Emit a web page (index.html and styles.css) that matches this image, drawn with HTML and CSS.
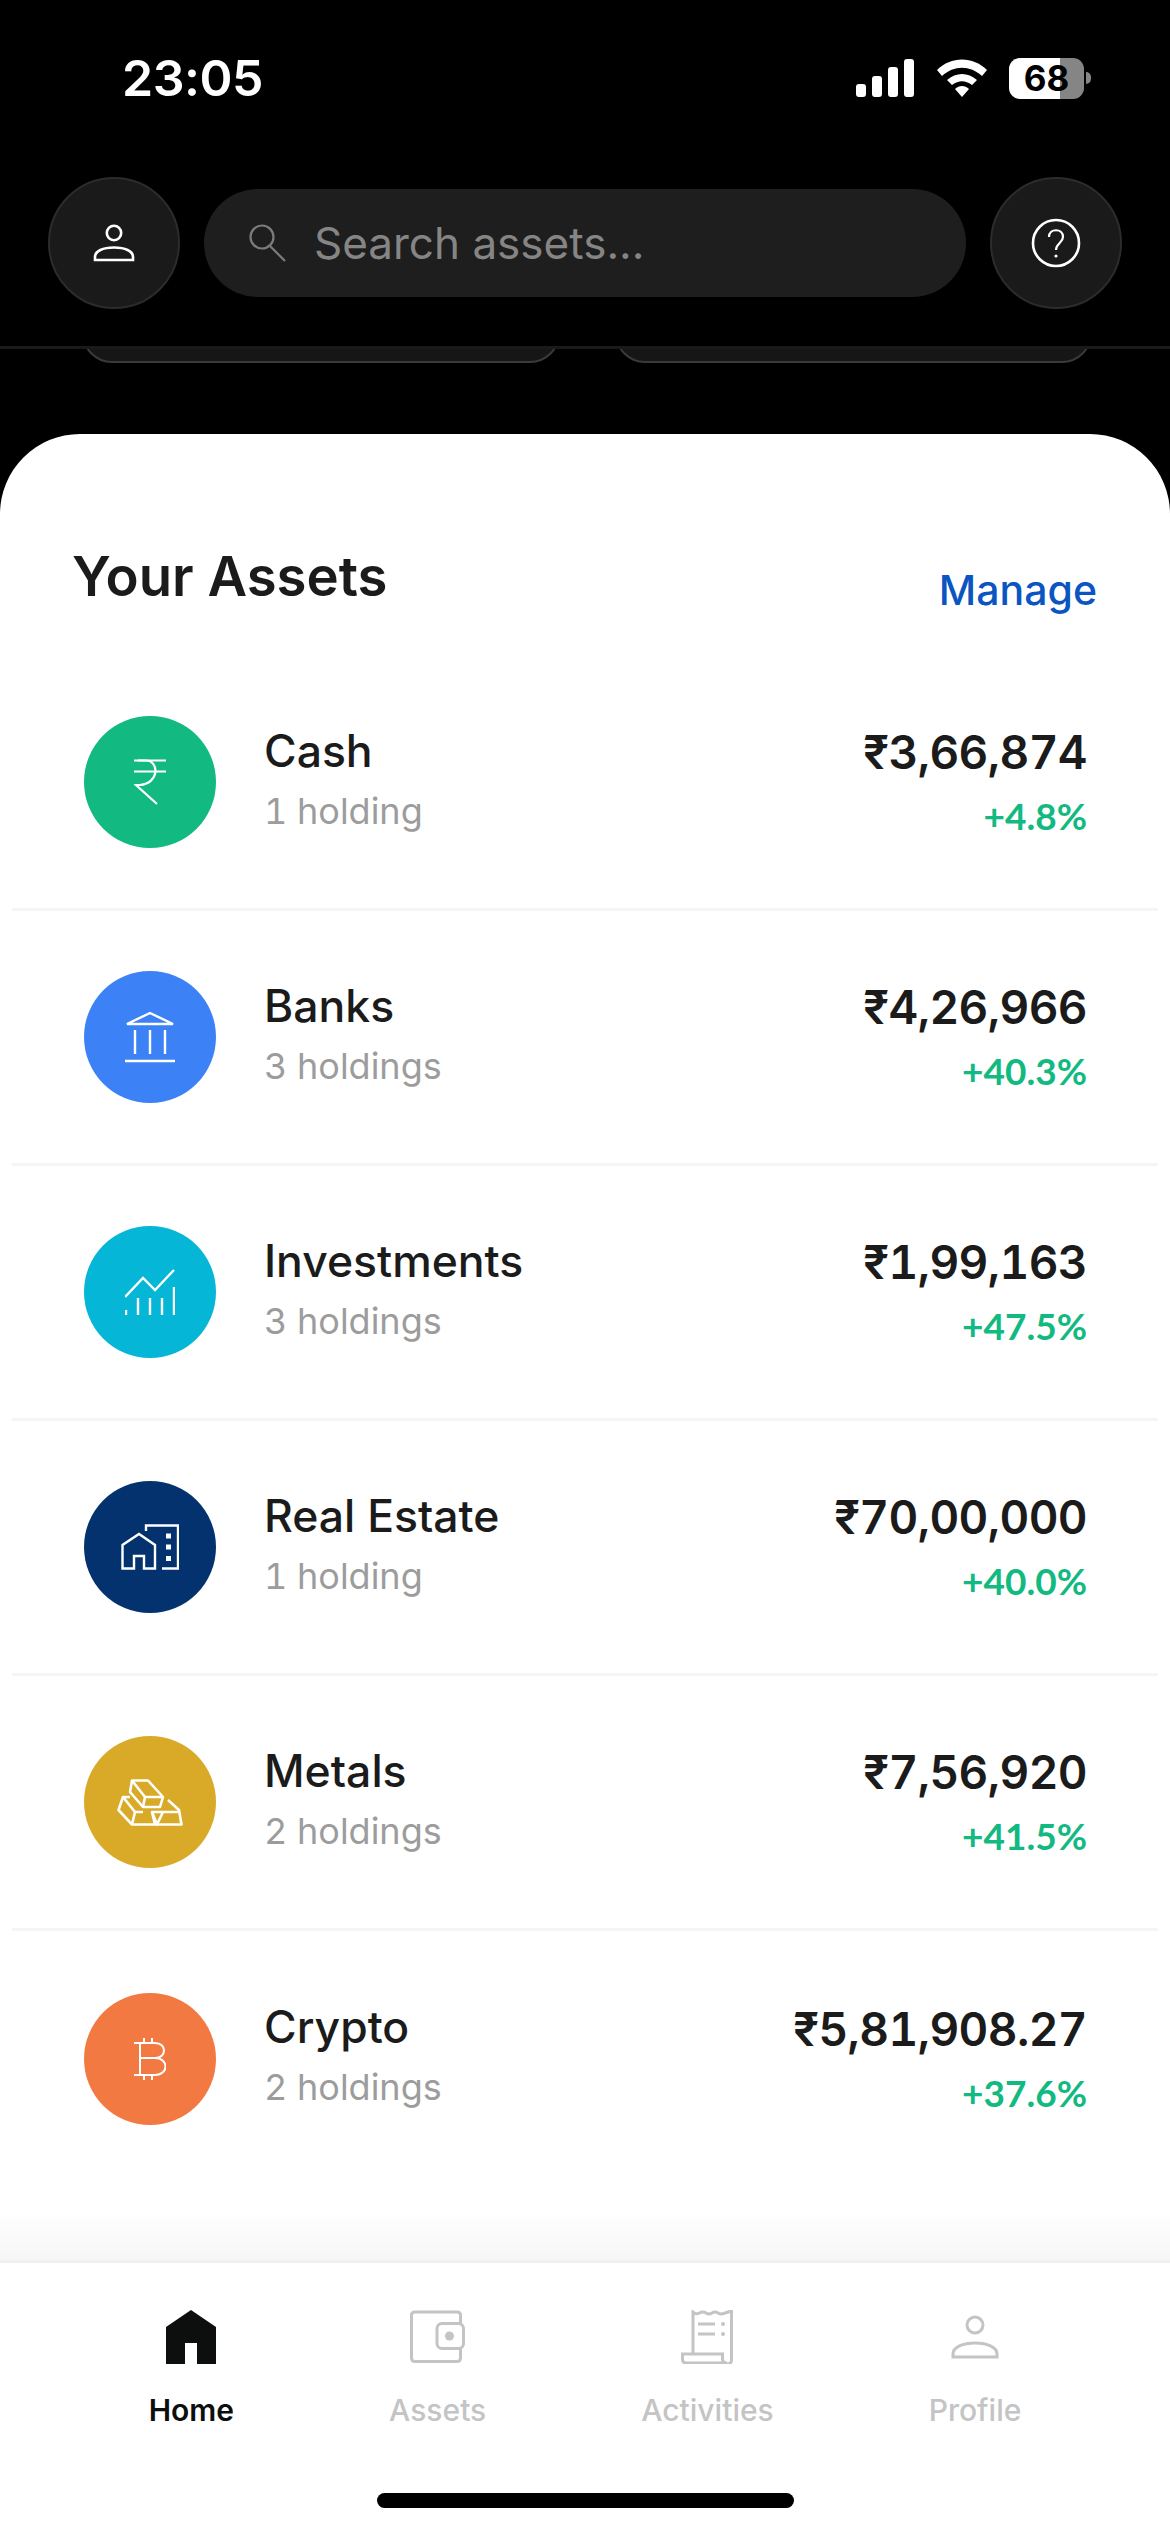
FILE: index.html
```html
<!DOCTYPE html>
<html lang="en">
  <head>
    <title>Assets</title>
    <meta charset="utf-8" />
    <meta name="viewport" content="width=device-width initial-scale=1" />
    <link rel="stylesheet" href="styles.css">
  </head>

  <body>
    <div class="screen">
      <div class="status">
        <span class="status__time">23:05</span>
        <div class="status__icons">
          <svg class="status__signal" viewBox="0 0 58 38" width="58" height="38">
            <rect x="0" y="25" width="10" height="13" rx="3" />
            <rect x="16" y="17" width="10" height="21" rx="3" />
            <rect x="32" y="8" width="10" height="30" rx="3" />
            <rect x="48" y="0" width="10" height="38" rx="3" />
          </svg>
          <svg class="status__wifi" viewBox="0 0 50 38" width="50" height="38">
            <path d="M0 11 C14 -3 36 -3 50 11 L45 17 C33 6 17 6 5 17 Z" />
            <path d="M10 21 C19 13 31 13 40 21 L35 26 C28 21 22 21 15 26 Z" />
            <path d="M18 30 C22 26 28 26 32 30 L25 38 Z" />
          </svg>
          <div class="battery">
            <span class="battery__level">68</span>
          </div>
          <span class="battery__tip"></span>
        </div>
      </div>

      <div class="topbar">
        <button class="round">
          <svg viewBox="0 0 42 38" width="42" height="38" fill="none" stroke="#fff" stroke-width="2.6">
            <circle cx="21" cy="9" r="7.2" />
            <path d="M2 36 V33 C2 27 10 23.5 21 23.5 C32 23.5 40 27 40 33 V36 Z" />
          </svg>
        </button>
        <div class="search">
          <svg viewBox="0 0 38 38" width="38" height="38" fill="none" stroke="#7c7c7c" stroke-width="2.2">
            <circle cx="14" cy="13" r="11.5" />
            <path d="M22 22 L37 37" />
          </svg>
          <span class="search__text">Search assets...</span>
        </div>
        <button class="round">
          <svg viewBox="0 0 50 50" width="50" height="50" fill="none" stroke="#fff" stroke-width="2.6">
            <circle cx="25" cy="25" r="23" />
            <path d="M18 19 C18 10 32 10 32 19 C32 25 25 25 25 32" stroke-width="2.2" />
            <circle cx="25" cy="38" r="1.6" fill="#fff" stroke="none" />
          </svg>
        </button>
      </div>

      <div class="peek">
        <div class="peek__card"></div>
        <div class="peek__card"></div>
      </div>

      <main class="sheet">
        <div class="sheet__head">
          <h1>Your Assets</h1>
          <a class="manage">Manage</a>
        </div>

        <ul class="list">
          <li class="asset">
            <span class="asset__icon asset__icon--cash">
              <svg viewBox="0 0 32 46" width="32" height="46" fill="none" stroke="#fff" stroke-width="2.2">
                <path d="M0 1.5 H32 M0 12.5 H32" />
                <path d="M4 1.5 H12 C25 1.5 26 24 6 26 H2 L23 45" />
              </svg>
            </span>
            <div class="asset__name">
              <strong>Cash</strong>
              <span>1 holding</span>
            </div>
            <div class="asset__value">
              <strong>₹3,66,874</strong>
              <span>+4.8%</span>
            </div>
          </li>

          <li class="asset">
            <span class="asset__icon asset__icon--banks">
              <svg viewBox="0 0 50 52" width="50" height="52" fill="none" stroke="#fff" stroke-width="2.4">
                <path d="M2 13 L25 2 L48 13 Z" />
                <path d="M10 19 V43 M25 19 V43 M40 19 V43" />
                <path d="M0 50 H50" />
              </svg>
            </span>
            <div class="asset__name">
              <strong>Banks</strong>
              <span>3 holdings</span>
            </div>
            <div class="asset__value">
              <strong>₹4,26,966</strong>
              <span>+40.3%</span>
            </div>
          </li>

          <li class="asset">
            <span class="asset__icon asset__icon--investments">
              <svg viewBox="0 0 50 46" width="50" height="46" fill="none" stroke="#fff" stroke-width="2.4">
                <path d="M0 28 L18 9 L30 21 L49 1" />
                <path d="M1 46 V41 M13 46 V29 M25 46 V29 M37 46 V29 M49 46 V18" />
              </svg>
            </span>
            <div class="asset__name">
              <strong>Investments</strong>
              <span>3 holdings</span>
            </div>
            <div class="asset__value">
              <strong>₹1,99,163</strong>
              <span>+47.5%</span>
            </div>
          </li>

          <li class="asset">
            <span class="asset__icon asset__icon--estate">
              <svg viewBox="0 0 58 46" width="58" height="46" fill="none" stroke="#fff" stroke-width="2.4">
                <path d="M25 7 V1.5 H57 V44.5 H41" />
                <path d="M1.5 44.5 V21 L18 10 L34 21 V44.5 H23 V32 H13 V44.5 Z" />
                <path d="M45 9.5 h5 v5 h-5 Z M45 20.5 h5 v5 h-5 Z M45 32 h5 v5 h-5 Z" fill="#fff" stroke="none" />
              </svg>
            </span>
            <div class="asset__name">
              <strong>Real Estate</strong>
              <span>1 holding</span>
            </div>
            <div class="asset__value">
              <strong>₹70,00,000</strong>
              <span>+40.0%</span>
            </div>
          </li>

          <li class="asset">
            <span class="asset__icon asset__icon--metals">
              <svg viewBox="0 0 66 47" width="66" height="47" fill="none" stroke="#fff" stroke-width="2.6" stroke-linejoin="round">
                <path d="M15 1.500 H31 L46 18 L43 28 H26 L13 13 Z" />
                <path d="M15 1.500 L28 18 H46 M28 18 L26 28" />
                <path d="M13 18 H6 L1.500 31 L15 45.500 H64.500 L62 31 L51 21" />
                <path d="M6 18 L18 33 H26 M18 33 L15 45.500" />
                <path d="M35 33 H62 M46 33 L40 45.500 L35 33 L38 45.500" />
              </svg>
            </span>
            <div class="asset__name">
              <strong>Metals</strong>
              <span>2 holdings</span>
            </div>
            <div class="asset__value">
              <strong>₹7,56,920</strong>
              <span>+41.5%</span>
            </div>
          </li>

          <li class="asset asset--last">
            <span class="asset__icon asset__icon--crypto">
              <svg viewBox="0 0 32 44" width="32" height="44" fill="none" stroke="#fff" stroke-width="2">
                <path d="M0 6 H21 C33 6 33 21 21 21 H5 M21 21 C35 21 35 38 21 38 H0" />
                <path d="M6 6 V38" />
                <path d="M10 1 V6 M18 1 V6 M10 38 V43 M18 38 V43" />
              </svg>
            </span>
            <div class="asset__name">
              <strong>Crypto</strong>
              <span>2 holdings</span>
            </div>
            <div class="asset__value">
              <strong>₹5,81,908.27</strong>
              <span>+37.6%</span>
            </div>
          </li>
        </ul>

        <div class="fade"></div>

        <nav class="tabs">
          <a class="tab tab--active">
            <svg viewBox="0 0 50 54" width="50" height="54">
              <path fill="#0d0f0e" d="M25 0 L50 17 V54 H31 V33 H19 V54 H0 V17 Z" />
            </svg>
            <span>Home</span>
          </a>
          <a class="tab">
            <svg viewBox="0 0 55 54" width="55" height="54" fill="none" stroke="#c4c4c4" stroke-width="3">
              <path d="M50.500 13 V5 Q50.500 2 47 2 H5 Q1.500 2 1.500 5 V48 Q1.500 51.500 5 51.500 H47 Q50.500 51.500 50.500 48 V38" />
              <rect x="27" y="13.500" width="26.500" height="25" rx="5" />
              <circle cx="39.500" cy="26" r="4.500" fill="#c4c4c4" stroke="none" />
            </svg>
            <span>Assets</span>
          </a>
          <a class="tab">
            <svg viewBox="0 0 52 54" width="52" height="54" fill="none" stroke="#c4c4c4" stroke-width="3">
              <path d="M12 44 V2 Q15 5 18.500 3 Q22 1 25 3 Q28 5 31 3 Q34 1 37 3 Q40 5 44 3 L50.500 1 V50 Q50.500 54 46 54 H44" />
              <path d="M1.500 44 H41.500 V49 Q41.500 53 46 53 H5 Q1.500 53 1.500 49 Z" />
              <path d="M17 14 H34 M17 24 H34" />
              <circle cx="42" cy="14" r="2" fill="#c4c4c4" stroke="none" />
              <circle cx="42" cy="24" r="2" fill="#c4c4c4" stroke="none" />
            </svg>
            <span>Activities</span>
          </a>
          <a class="tab">
            <svg viewBox="0 0 50 54" width="50" height="54" fill="none" stroke="#c4c4c4" stroke-width="3">
              <circle cx="25" cy="15" r="8" />
              <path d="M3 47 V44 C3 37 13 33 25 33 C37 33 47 37 47 44 V47 Z" />
            </svg>
            <span>Profile</span>
          </a>
        </nav>

        <div class="home-bar"></div>
      </main>
    </div>
  </body>
</html>
```

FILE: styles.css
```css
* {
  box-sizing: border-box;
}

html,
body {
  margin: 0;
  padding: 0;
  background: #000;
}

.screen {
  display: flex;
  flex-direction: column;
  width: 1170px;
  height: 2532px;
  overflow: hidden;
  font-family: "Inter", "Noto Sans", sans-serif;
}

/* status bar */

.status {
  display: flex;
  align-items: center;
  justify-content: space-between;
  height: 78px;
  margin-top: 39px;
  margin-bottom: 60px;
  padding: 0 79px 0 122px;
  color: #fff;
}

.status__time {
  font-size: 50px;
  font-weight: 600;
  letter-spacing: -0.5px;
}

.status__icons {
  display: flex;
  align-items: center;
}

.status__signal,
.status__wifi {
  fill: #fff;
}

.status__signal {
  margin-right: 23px;
}

.status__wifi {
  margin-right: 22px;
}

.battery {
  width: 75px;
  height: 41px;
  border-radius: 11px;
  background: linear-gradient(to right, #fff 68%, #858585 68%);
  color: #000;
  text-align: center;
  font-size: 35px;
  font-weight: 700;
  line-height: 41px;
}

.battery__tip {
  width: 5px;
  height: 12px;
  margin-left: 2px;
  border-radius: 0 6px 6px 0;
  background: #858585;
}

/* search row */

.topbar {
  display: flex;
  align-items: center;
  gap: 24px;
  padding: 0 48px;
  height: 132px;
  flex-shrink: 0;
}

.round {
  all: unset;
  box-sizing: border-box;
  display: flex;
  align-items: center;
  justify-content: center;
  flex-shrink: 0;
  width: 132px;
  height: 132px;
  border: 2px solid #2c2c2c;
  border-radius: 50%;
  background: #1a1a1a;
}

.search {
  display: flex;
  align-items: center;
  flex: 1;
  gap: 28px;
  height: 108px;
  padding-left: 44px;
  border-radius: 54px;
  background: #1e1e1e;
}

.search__text {
  color: #858585;
  font-size: 44px;
}

.peek {
  display: flex;
  gap: 55px;
  flex-shrink: 0;
  height: 17px;
  margin-top: 37px;
  margin-bottom: 71px;
  padding: 0 78px 0 82px;
  border-top: 3px solid #1a1a1a;
  overflow: hidden;
}

.peek__card {
  flex: 1;
  height: 60px;
  margin-top: -46px;
  border: 2px solid #3a3a3a;
  border-radius: 44px;
  background: #161616;
}

/* white sheet */

.sheet {
  display: flex;
  flex-direction: column;
  flex: 1;
  border-radius: 80px 80px 0 0;
  background: #fff;
}

.sheet__head {
  display: flex;
  align-items: flex-start;
  justify-content: space-between;
  flex-shrink: 0;
  height: 222px;
  padding: 108px 73px 0 72px;
}

h1 {
  margin: 0;
  color: #1b1b1b;
  font-size: 54.5px;
  font-weight: 600;
  line-height: 68px;
}

.manage {
  margin-top: 20px;
  color: #0a55c2;
  font-size: 41px;
  font-weight: 500;
  line-height: 56px;
}

.list {
  margin: 0;
  padding: 0 12px;
  list-style-type: none;
}

.asset {
  display: flex;
  align-items: center;
  height: 255px;
  padding: 0 71px 0 72px;
  border-bottom: 3px solid #f5f5f5;
}

.asset--last {
  border-bottom: 0;
}

.asset__icon {
  display: flex;
  align-items: center;
  justify-content: center;
  flex-shrink: 0;
  width: 132px;
  height: 132px;
  margin-right: 48px;
  border-radius: 50%;
}

.asset__icon--cash {
  background: #12b981;
}

.asset__icon--banks {
  background: #3c82f6;
}

.asset__icon--investments {
  background: #06b6d6;
}

.asset__icon--estate {
  background: #03326e;
}

.asset__icon--metals {
  background: #d8aa27;
}

.asset__icon--crypto {
  background: #f27a42;
}

.asset__name,
.asset__value {
  display: flex;
  flex-direction: column;
}

.asset__name {
  flex: 1;
  gap: 10px;
  padding-bottom: 7px;
}

.asset__value {
  align-items: flex-end;
  gap: 14px;
}

.asset__name strong,
.asset__value strong {
  color: #1b1b1b;
  line-height: 54px;
}

.asset__name strong {
  font-size: 44.5px;
  font-weight: 500;
}

.asset__value strong {
  font-size: 46px;
  font-weight: 600;
  font-variant-numeric: tabular-nums;
  letter-spacing: -0.6px;
}

.asset__name span {
  color: #9c9c9c;
  font-size: 36px;
  font-variant-numeric: tabular-nums;
  line-height: 46px;
}

.asset__value span {
  color: #12b981;
  font-family: "Lato", sans-serif;
  font-size: 37px;
  font-weight: 700;
  line-height: 46px;
}

/* bottom tabs */

.fade {
  flex: 1;
  background: linear-gradient(to bottom, #fff 35%, #f6f6f6);
}

.tabs {
  display: flex;
  justify-content: center;
  gap: 155px;
  height: 233px;
  padding-top: 47px;
  border-top: 3px solid #f0f0f0;
}

.tab {
  display: flex;
  flex-direction: column;
  align-items: center;
  gap: 28px;
  color: #c4c4c4;
  font-size: 30px;
  font-weight: 500;
  line-height: 36px;
}

.tab--active {
  color: #0d0f0e;
  font-weight: 600;
}

.home-bar {
  flex-shrink: 0;
  width: 417px;
  height: 15px;
  margin: 0 auto 24px;
  border-radius: 8px;
  background: #000;
}
```
